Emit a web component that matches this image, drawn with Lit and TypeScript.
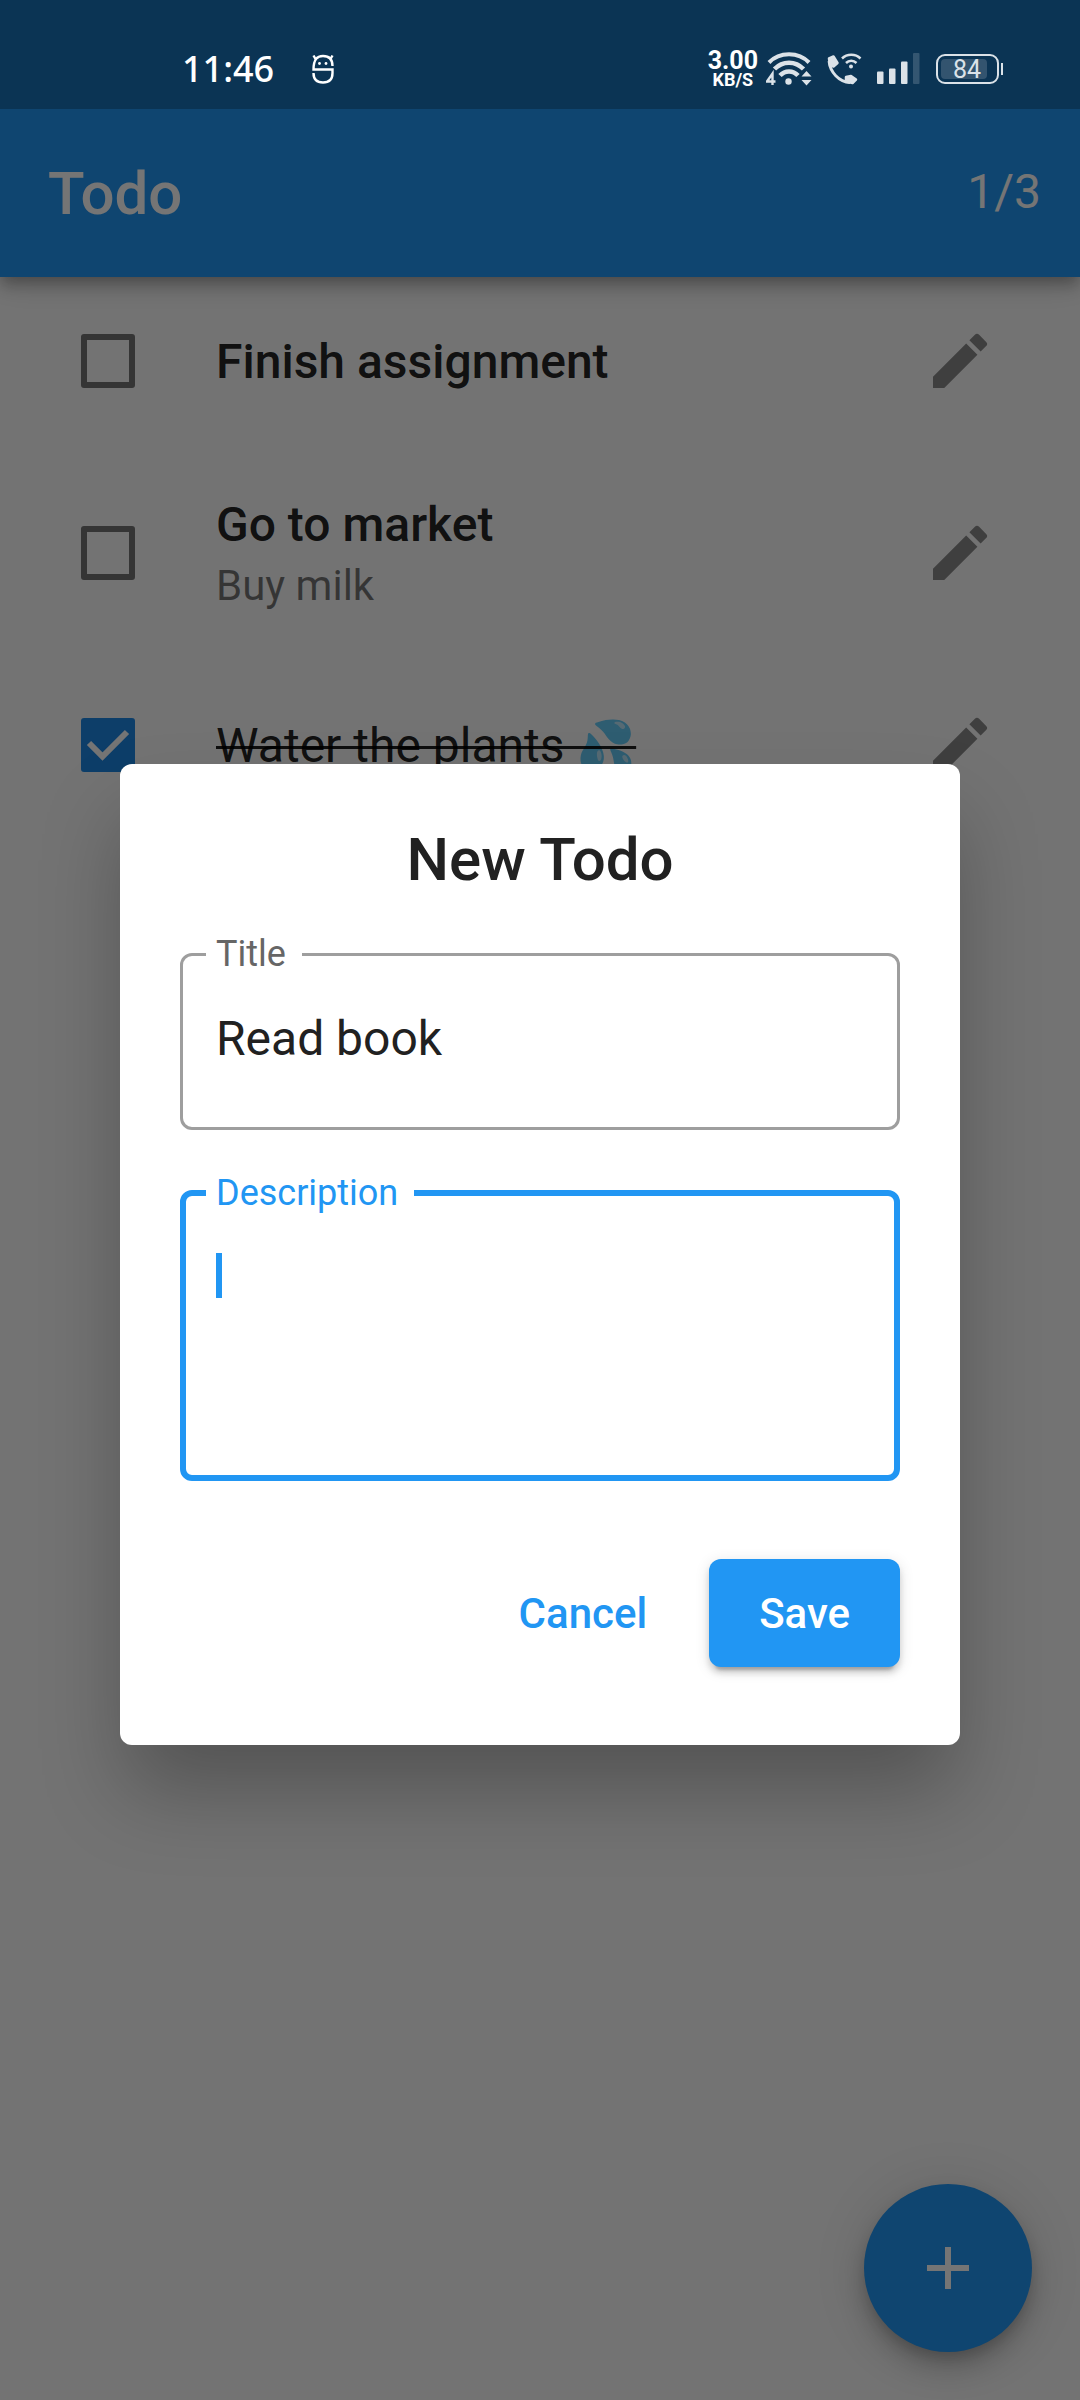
import { LitElement, html, css, svg, nothing } from "lit";
import { customElement, property, state } from "lit/decorators.js";
import { classMap } from "lit/directives/class-map.js";

interface Todo {
  title: string;
  note?: string;
  done: boolean;
}

@customElement("status-bar")
class StatusBar extends LitElement {
  static styles = css`
    :host {
      display: flex;
      align-items: center;
      justify-content: space-between;
      height: 109px;
      box-sizing: border-box;
      padding: 28px 77px 0 182px;
      background: #0b3454;
      color: #fff;
      font-family: "Noto Sans", Roboto, sans-serif;
    }
    .side {
      display: flex;
      align-items: center;
    }
    .clock {
      font-size: 36px;
      line-height: 48px;
      font-weight: 500;
      margin-right: 38px;
    }
    .rate {
      display: flex;
      flex-direction: column;
      align-items: center;
      gap: 1px;
      margin-right: 8px;
      font-family: Roboto, sans-serif;
      font-weight: 700;
    }
    .amount {
      font-size: 25px;
      line-height: 21px;
    }
    .unit {
      font-size: 18px;
      line-height: 16px;
    }
    svg {
      display: block;
    }
    .wifi {
      margin-right: 14px;
    }
    .call {
      margin-right: 15px;
    }
    .signal {
      margin-right: 16px;
    }
    .battery {
      display: flex;
      align-items: center;
      gap: 2px;
    }
    .cell {
      box-sizing: border-box;
      width: 63px;
      height: 30px;
      padding: 3px;
      border: 2px solid #dbe2e8;
      border-radius: 9px;
    }
    .charge {
      width: 46px;
      height: 20px;
      padding-left: 6px;
      box-sizing: border-box;
      border-radius: 4px;
      background: #33546f;
      color: #dbe2e8;
      font-family: Roboto, sans-serif;
      font-size: 25px;
      line-height: 21px;
      text-align: center;
    }
    .tip {
      width: 2px;
      height: 12px;
      background: #dbe2e8;
    }
  `;

  render() {
    return html`
      <div class="side">
        <span class="clock">11:46</span>
        <svg width="22" height="30" viewBox="0 0 22 30" fill="none" stroke="#fff" stroke-width="2.400">
          <path d="M20.500 12C20.500 5 16.500 2 11 2S1.500 5 1.500 15.500H20.500V19C20.500 25 17 28.500 11 28.500S1.500 25 1.500 19" />
          <path d="M3.500 5 1.500 1.500M18.500 5 20.500 1.500" />
          <circle cx="7.500" cy="9.500" r="1.400" fill="#fff" stroke="none" />
          <circle cx="14" cy="9.500" r="1.400" fill="#fff" stroke="none" />
        </svg>
      </div>
      <div class="side">
        <div class="rate">
          <span class="amount">3.00</span>
          <span class="unit">KB/S</span>
        </div>
        <svg class="wifi" width="46" height="34" viewBox="0 0 46 34" fill="none" stroke="#dbe2e8">
          <path d="M3 10.500C13.500-.500 32.500-.500 43 10.500" stroke-width="4" />
          <path d="M8.500 17C16.500 8.500 29.500 8.500 37.500 17" stroke-width="4.500" />
          <path d="M14 23.500c5-5.500 13-5.500 18 0" stroke-width="4.500" />
          <circle cx="22.500" cy="29.500" r="3.200" fill="#dbe2e8" stroke="none" />
          <path d="M35.500 24.500 40.500 19l5 5.500zM35.500 28l5 5.500 5-5.500z" fill="#dbe2e8" stroke="none" />
          <path d="M6.500 33V21.500L1 29.500h8.500" stroke-width="2.400" />
        </svg>
        <svg class="call" width="36" height="32" viewBox="0 0 36 32" fill="none" stroke="#dbe2e8">
          <path d="M3 8C4 19 13 29 24 29.500" stroke-width="2.800" />
          <path
            d="M3 5.500 7.500 3.500 11.500 10 7.500 13.500 4 12zM20 24 25 23 30 26.500 26.500 30 20 28.500z"
            fill="#dbe2e8" stroke-width="2.500" stroke-linejoin="round" />
          <path d="M16 5.500C21 .500 29.500.500 34.500 5.500M20 10c3-3 7.500-3 10.500 0" stroke-width="2.500" />
          <circle cx="25" cy="13.500" r="2" fill="#dbe2e8" stroke="none" />
        </svg>
        <svg class="signal" width="43" height="31" viewBox="0 0 43 31" fill="#dbe2e8">
          <rect x="0" y="18.500" width="6.500" height="12.500" rx="1" />
          <rect x="12" y="15.500" width="6.500" height="15.500" rx="1" />
          <rect x="24" y="8.500" width="6.500" height="22.500" rx="1" />
          <rect x="36" y="0" width="6.500" height="31" rx="1" opacity=".2" />
        </svg>
        <div class="battery">
          <div class="cell"><div class="charge">84</div></div>
          <span class="tip"></span>
        </div>
      </div>
    `;
  }
}

@customElement("todo-row")
class TodoRow extends LitElement {
  @property({ attribute: false }) todo!: Todo;

  static styles = css`
    :host {
      display: flex;
      align-items: center;
      min-height: 168px;
      box-sizing: border-box;
      padding: 0 48px;
    }
    :host([tall]) {
      min-height: 216px;
    }
    .box {
      appearance: none;
      box-sizing: border-box;
      flex: none;
      width: 54px;
      height: 54px;
      margin: 0 81px 0 33px;
      border: 6px solid rgba(0, 0, 0, 0.54);
      border-radius: 3px;
    }
    .box:checked {
      border: 0;
      background: #1e88e5;
    }
    .lead {
      display: grid;
    }
    .lead > * {
      grid-area: 1 / 1;
    }
    .tick {
      width: 54px;
      height: 54px;
      margin-left: 33px;
      pointer-events: none;
    }
    .text {
      flex: 1;
      display: flex;
      flex-direction: column;
      gap: 8px;
      padding-top: 2px;
    }
    .title {
      font-size: 48px;
      line-height: 56px;
      font-weight: 500;
      color: rgba(0, 0, 0, 0.87);
    }
    .done {
      font-weight: 400;
      text-decoration: line-through 3px;
    }
    .note {
      font-size: 42px;
      line-height: 50px;
      color: rgba(0, 0, 0, 0.54);
    }
    .edit {
      display: grid;
      place-items: center;
      width: 144px;
      height: 144px;
      padding: 0;
      border: 0;
      background: none;
    }
    .edit svg {
      width: 72px;
      height: 72px;
      fill: rgba(0, 0, 0, 0.45);
    }
  `;

  render() {
    const { title, note, done } = this.todo;
    return html`
      <div class="lead">
        <input class="box" id="done" type="checkbox" .checked=${done} />
        ${done
          ? html`<svg class="tick" viewBox="0 0 54 54" fill="none" stroke="#fff" stroke-width="6">
              <path d="M8 25 21.500 38.500 46 14" />
            </svg>`
          : nothing}
      </div>
      <div class="text">
        <label for="done" class=${classMap({ title: true, done })}>${title}</label>
        ${note ? html`<span class="note">${note}</span>` : nothing}
      </div>
      <button class="edit" type="button" aria-label="Edit">
        <svg viewBox="0 0 24 24">
          ${svg`<path d="M3 17.250V21h3.750L17.810 9.940l-3.750-3.750L3 17.250zM20.710 7.040a1 1 0 0 0 0-1.410l-2.340-2.340a1 1 0 0 0-1.410 0l-1.830 1.830 3.750 3.750 1.830-1.830z" />`}
        </svg>
      </button>
    `;
  }
}

@customElement("todo-dialog")
class TodoDialog extends LitElement {
  static styles = css`
    :host {
      display: block;
    }
    .card {
      box-sizing: border-box;
      padding: 60px;
      border-radius: 12px;
      background: #fff;
      box-shadow: 0 50px 84px -6px rgba(0, 0, 0, 0.28);
    }
    .heading {
      margin: 0;
      padding: 1px 0 38px;
      font-size: 60px;
      line-height: 70px;
      font-weight: 500;
      text-align: center;
      color: #212121;
    }
    .field {
      margin: 0;
      min-width: 0;
      padding: 0 33px 60px 23px;
      border: 3px solid #9e9e9e;
      border-radius: 12px;
      color: #666;
    }
    .active {
      margin-top: 42px;
      padding-left: 20px;
      border: 6px solid #2196f3;
      color: #2196f3;
    }
    .legend {
      padding: 0 16px 0 10px;
      font-size: 36px;
      line-height: 42px;
    }
    .entry {
      display: block;
      box-sizing: border-box;
      width: 100%;
      height: 56px;
      margin: 36px 0 0;
      padding: 0 0 0 10px;
      border: 0;
      outline: 0;
      background: none;
      color: #212121;
      font: 400 48px/56px Roboto, sans-serif;
      resize: none;
    }
    .area {
      position: relative;
      margin-top: 33px;
    }
    .lines {
      height: 168px;
      margin: 0;
      caret-color: transparent;
    }
    .caret {
      position: absolute;
      left: 10px;
      top: 6px;
      width: 6px;
      height: 45px;
      background: #2196f3;
    }
    .actions {
      display: flex;
      justify-content: flex-end;
      align-items: center;
      gap: 36px;
      min-height: 144px;
      margin-top: 60px;
    }
    .btn {
      height: 108px;
      border: 0;
      border-radius: 12px;
      font: 500 42px/50px Roboto, sans-serif;
    }
    .cancel {
      padding: 2px 26px 0;
      background: none;
      color: #2196f3;
    }
    .save {
      padding: 2px 50px 0;
      background: #2196f3;
      color: #fff;
      box-shadow: 0 9px 3px -6px rgba(0, 0, 0, 0.2), 0 6px 6px rgba(0, 0, 0, 0.14),
        0 3px 15px rgba(0, 0, 0, 0.12);
    }
  `;

  render() {
    return html`
      <form class="card" role="dialog" aria-labelledby="heading" @submit=${(e: Event) => e.preventDefault()}>
        <h2 class="heading" id="heading">New Todo</h2>
        <fieldset class="field">
          <legend class="legend"><label for="title">Title</label></legend>
          <input class="entry" id="title" type="text" value="Read book" />
        </fieldset>
        <fieldset class="field active">
          <legend class="legend"><label for="description">Description</label></legend>
          <div class="area">
            <textarea class="entry lines" id="description"></textarea>
            <span class="caret"></span>
          </div>
        </fieldset>
        <div class="actions">
          <button class="btn cancel" type="button">Cancel</button>
          <button class="btn save" type="submit">Save</button>
        </div>
      </form>
    `;
  }
}

@customElement("app-root")
class AppRoot extends LitElement {
  @state() private todos: Todo[] = [
    { title: "Finish assignment", done: false },
    { title: "Go to market", note: "Buy milk", done: false },
    { title: "Water the plants 💦", done: true },
  ];

  static styles = css`
    :host {
      display: flex;
      flex-direction: column;
      position: relative;
      min-height: 100vh;
      overflow: hidden;
      background: #fafafa;
      font-family: Roboto, "Noto Color Emoji", sans-serif;
    }
    .status {
      position: relative;
      z-index: 2;
    }
    .bar {
      display: flex;
      align-items: center;
      justify-content: space-between;
      height: 168px;
      box-sizing: border-box;
      padding: 2px 39px 0 48px;
      background: #2196f3;
      color: #fff;
      box-shadow: 0 6px 12px -3px rgba(0, 0, 0, 0.2), 0 12px 15px rgba(0, 0, 0, 0.14),
        0 3px 30px rgba(0, 0, 0, 0.12);
    }
    .name {
      margin: 0;
      font-size: 60px;
      line-height: 70px;
      font-weight: 500;
    }
    .count {
      font-size: 48px;
      line-height: 56px;
      padding-bottom: 4px;
    }
    .list {
      flex: 1;
    }
    .fab {
      position: absolute;
      right: 48px;
      bottom: 48px;
      display: grid;
      place-items: center;
      width: 168px;
      height: 168px;
      padding: 0;
      border: 0;
      border-radius: 50%;
      background: #2196f3;
      box-shadow: 0 9px 15px -3px rgba(0, 0, 0, 0.2), 0 18px 30px rgba(0, 0, 0, 0.14),
        0 3px 54px rgba(0, 0, 0, 0.12);
    }
    .scrim {
      position: absolute;
      inset: 0;
      z-index: 1;
      display: grid;
      align-items: center;
      padding: 109px 120px 0;
      background: rgba(0, 0, 0, 0.54);
    }
  `;

  render() {
    const done = this.todos.filter((t) => t.done).length;
    return html`
      <status-bar class="status"></status-bar>
      <header class="bar">
        <h1 class="name">Todo</h1>
        <span class="count">${done}/${this.todos.length}</span>
      </header>
      <main class="list">
        ${this.todos.map((t) => html`<todo-row .todo=${t} ?tall=${!!t.note}></todo-row>`)}
      </main>
      <button class="fab" type="button" aria-label="Add">
        <svg width="72" height="72" viewBox="0 0 24 24" fill="#fff">
          <path d="M19 13h-6v6h-2v-6H5v-2h6V5h2v6h6v2z" />
        </svg>
      </button>
      <div class="scrim"><todo-dialog></todo-dialog></div>
    `;
  }
}
